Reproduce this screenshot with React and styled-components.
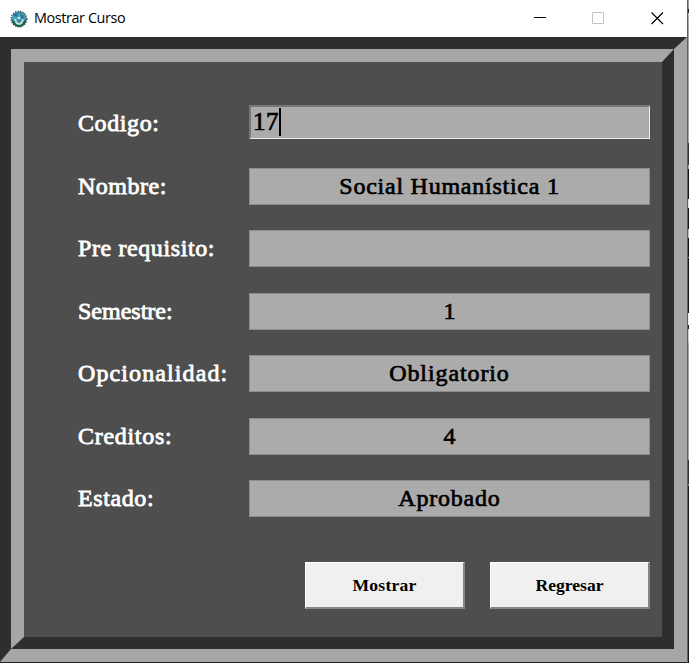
import React from 'react';
import styled, { createGlobalStyle } from 'styled-components';

const Global = createGlobalStyle`
  * { box-sizing: border-box; }
  body { margin: 0; background: #fff; overflow: hidden; }
`;
const Screen = styled.div`
  display: grid;
  grid-template-columns: 687px 2px;
  width: 689px;
  height: 663px;
  background: #202020;
`;
const Desktop = styled.div`
  border-left: 1px solid #5f5f5f;
  background: linear-gradient(#999 0 9px, #222 9px 13px, #bbb 13px 17px, #a5a5a5 17px 143px,
    #333 143px 165px, #aaa 165px 169px, #151515 169px 199px, #ddd 199px 208px, #151515 208px 229px,
    #bbb 229px 238px, #111 238px 257px, #999 257px 258px, #151515 258px 313px, #eee 313px 325px,
    #222 325px 329px, #ccc 329px 343px, #a5a5a5 343px 460px, #333 460px 484px, #888 484px 486px,
    #1b1b1b 486px);
`;
const Window = styled.main`
  display: flex;
  flex-direction: column;
  height: 662px;
`;
const TitleBar = styled.header`
  display: flex;
  align-items: center;
  height: 37px;
  padding-left: 10px;
  background: #fff;
`;
const Title = styled.h1`
  flex: 1;
  margin: -2px 0 0 6px;
  font: 400 14.4px/20px "Open Sans", "Noto Sans", sans-serif;
  letter-spacing: -0.4px;
  color: #000;
`;
const Controls = styled.div`
  display: flex;
  height: 100%;
  svg { display: block; }
`;
const Control = styled.button`
  display: grid;
  place-items: center;
  width: 58.5px;
  padding: 0;
  border: 0;
  background: none;
`;
const OuterFrame = styled.section`
  flex: 1;
  display: flex;
  border: solid;
  border-width: 12px 13px 13px 11px;
  border-color: #2e2e2e #a6a6a6 #a6a6a6 #2e2e2e;
`;
const InnerFrame = styled.form`
  flex: 1;
  border: solid;
  border-width: 13px 12px 12px 13px;
  border-color: #a6a6a6 #2e2e2e #2e2e2e #a6a6a6;
  background: #4e4e4e;
  padding: 37px 12px 0 54px;
`;
const Row = styled.div`
  display: grid;
  grid-template-columns: 171px 401px;
  align-items: center;
  height: 62.5px;
  padding-bottom: 13px;
`;
const serif = '"Liberation Serif", "Times New Roman", serif';
const Label = styled.label`
  margin-top: -1px;
  font: 400 24px/30px ${serif};
  letter-spacing: ${p => p.$spacing}px;
  -webkit-text-stroke: 0.8px #fff;
  color: #fff;
  white-space: nowrap;
`;
const Value = styled.output`
  display: block;
  height: 37px;
  border: 1px solid #8c8c8c;
  background: #ababab;
  font: 400 24px/35px ${serif};
  letter-spacing: ${p => p.$spacing}px;
  -webkit-text-stroke: 0.7px #000;
  color: #000;
  text-align: center;
  white-space: nowrap;
`;
const Entry = styled.div`
  display: flex;
  align-items: center;
  height: 34px;
  margin-top: -4px;
  padding-left: 2px;
  border: solid;
  border-width: 2px 1px 1px 2px;
  border-color: #777 #eee #eee #777;
  background: #ababab;
  font: 400 25px/28px ${serif};
  letter-spacing: 0.4px;
  -webkit-text-stroke: 0.7px #000;
`;
const Caret = styled.span`
  width: 2px;
  height: 28px;
  background: #000;
`;
const Actions = styled.div`
  display: flex;
  justify-content: flex-end;
  gap: 25px;
  margin-top: 25.5px;
`;
const Action = styled.button`
  width: 160px;
  height: 47px;
  padding: 0;
  border: solid;
  border-width: 1px 2px 2px 1px;
  border-color: #fff #858585 #858585 #fff;
  background: #f0f0f0;
  font: 700 17.6px/24px ${serif};
  letter-spacing: ${p => p.$spacing}px;
  color: #000;
`;

const fields = [
  { label: 'Nombre:', ls: 0.5, value: 'Social Humanística 1', vs: 0.75 },
  { label: 'Pre requisito:', ls: 0.6, value: '', vs: 0 },
  { label: 'Semestre:', ls: 0, value: '1', vs: 0 },
  { label: 'Opcionalidad:', ls: 1.1, value: 'Obligatorio', vs: 0.9 },
  { label: 'Creditos:', ls: 0.7, value: '4', vs: 0 },
  { label: 'Estado:', ls: 0.6, value: 'Aprobado', vs: 0.8 },
];

function AppIcon() {
  return (
    <svg width="18" height="18" viewBox="0 0 18 18" aria-hidden="true">
      <circle cx="9" cy="9" r="7.6" fill="#3089a5" />
      <circle cx="9" cy="9" r="7.8" fill="none" stroke="#314d43" strokeWidth="1.3" strokeDasharray="1.3 1.2" />
      <path d="M2 6l4-3 3 1 3-1 4 5-3 3-3-2-3 2-4-1z" fill="#49a5bf" />
      <path d="M3 5l3-2 2 2-2 2zM10 4l3 1 1 3-2 1z" fill="#2b718d" />
      <path d="M2 10l3 2 1 2 3 1 3-1 1-3 3-1-1 4-4 3H7l-4-3z" fill="#176342" />
      <path d="M4 9h2l1 3 2 1 2-1 1-3 2 1-2 4-3 1-3-1z" fill="#c5e2d9" />
      <path d="M8 7h2v2H8z" fill="#dce8df" />
    </svg>
  );
}

export default function App() {
  return (
    <>
      <Global />
      <Screen>
        <Window>
          <TitleBar>
            <AppIcon />
            <Title>Mostrar Curso</Title>
            <Controls>
              <Control type="button" aria-label="Minimizar">
                <svg width="13" height="13"><path d="M0 5.5h12" stroke="#000" /></svg>
              </Control>
              <Control type="button" aria-label="Maximizar" disabled>
                <svg width="15" height="13"><path d="M.5.5h11v11H.5z" fill="none" stroke="#c4c4c4" /></svg>
              </Control>
              <Control type="button" aria-label="Cerrar">
                <svg width="13" height="13"><path d="M.5.5l11.5 11.5M12 .5L.5 12" stroke="#000" strokeWidth="1.2" /></svg>
              </Control>
            </Controls>
          </TitleBar>
          <OuterFrame>
            <InnerFrame>
              <Row>
                <Label $spacing={0.6}>Codigo:</Label>
                <Entry>17<Caret /></Entry>
              </Row>
              {fields.map(f => (
                <Row key={f.label}>
                  <Label $spacing={f.ls}>{f.label}</Label>
                  <Value $spacing={f.vs}>{f.value}</Value>
                </Row>
              ))}
              <Actions>
                <Action type="button" $spacing={0.2}>Mostrar</Action>
                <Action type="button" $spacing={0}>Regresar</Action>
              </Actions>
            </InnerFrame>
          </OuterFrame>
        </Window>
        <Desktop />
      </Screen>
    </>
  );
}
